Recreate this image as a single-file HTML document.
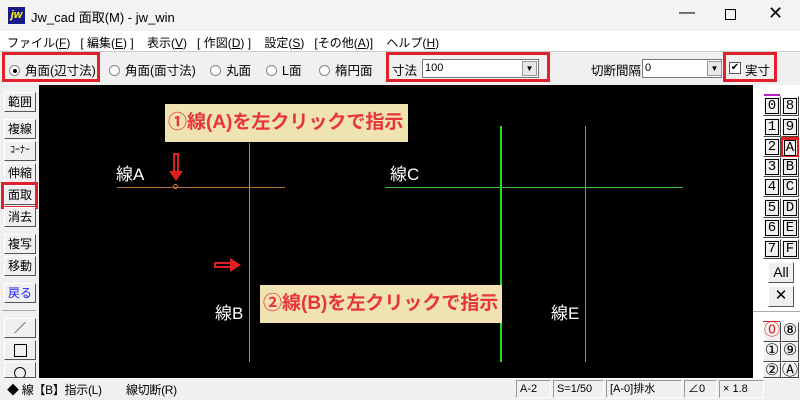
<!DOCTYPE html>
<html><head><meta charset="utf-8"><style>
*{margin:0;padding:0;box-sizing:border-box}
body{width:800px;height:400px;overflow:hidden;background:#f0f0f0;font-family:"Liberation Sans","Noto Sans CJK JP",sans-serif;font-size:12px;color:#000;position:relative}
.a{position:absolute}
.btn{position:absolute;background:#f0f0f0;border:1px solid;border-color:#fff #555 #555 #fff;text-align:center;font-size:12px;line-height:18px}
.rb{position:absolute;width:18px;height:20px;border:1px solid;border-color:#fff #444 #444 #fff;background:#f0f0f0;font-family:"Liberation Mono",monospace;font-size:14px;text-align:center;line-height:17px}
.rb span{display:inline-block;border:1px solid #000;width:14px;height:16px;line-height:14px;margin-top:1px}
.red{position:absolute;border:3px solid #e0202a}
.radio{display:inline-block;width:11px;height:11px;border:1px solid #888;border-radius:50%;background:#fff;vertical-align:-1px;margin-right:5px;position:relative}
.call{position:absolute;background:#efe4b0;color:#e8343a;font-weight:bold;font-size:19px;line-height:38px;padding-left:3px;white-space:nowrap}
.lbl{position:absolute;color:#fff;font-size:17px;font-family:"Liberation Sans","Noto Sans CJK JP",sans-serif}
.sb{position:absolute;top:380px;height:18px;border:1px solid;border-color:#999 #fff #fff #999;font-size:11px;line-height:16px;padding-left:3px}
</style></head><body>
<div class="a" style="left:0;top:0;width:800px;height:31px;background:#f3f3f3"></div>
<div class="a" style="left:8px;top:7px;width:17px;height:17px;background:#1a1a8a;color:#ff0;font-weight:bold;font-style:italic;font-size:11px;line-height:17px;text-align:center">jw</div>
<div class="a" style="left:31px;top:7px;font-size:13px">Jw_cad 面取(M) - jw_win</div>
<div class="a" style="left:679px;top:4px;font-size:16px">—</div>
<div class="a" style="left:725px;top:9px;width:11px;height:11px;border:1px solid #000"></div>
<div class="a" style="left:768px;top:3px;font-size:18px">✕</div>
<div class="a" style="left:0;top:31px;width:800px;height:20px;background:#fff"></div>
<div class="a" style="left:7px;top:34px;font-size:12px;white-space:pre">ファイル(<u>F</u>)   [ 編集(<u>E</u>) ]    表示(<u>V</u>)   [ 作図(<u>D</u>) ]    設定(<u>S</u>)   [その他(<u>A</u>)]    ヘルプ(<u>H</u>)</div>
<div class="a" style="left:0;top:51px;width:800px;height:34px;background:#f0f0f0;border-top:1px solid #ccc"></div>
<div class="a" style="left:9px;top:60px;font-size:12.5px;white-space:nowrap"><span class="radio"><span class="a" style="left:3px;top:3px;width:4px;height:4px;background:#000;border-radius:50%"></span></span>角面(辺寸法)</div>
<div class="a" style="left:109px;top:60px;font-size:12.5px;white-space:nowrap"><span class="radio"></span>角面(面寸法)</div>
<div class="a" style="left:210px;top:60px;font-size:12.5px;white-space:nowrap"><span class="radio"></span>丸面</div>
<div class="a" style="left:266px;top:60px;font-size:12.5px;white-space:nowrap"><span class="radio"></span>L面</div>
<div class="a" style="left:319px;top:60px;font-size:12.5px;white-space:nowrap"><span class="radio"></span>楕円面</div>
<div class="red" style="left:2px;top:52px;width:98px;height:30px"></div>
<div class="a" style="left:392px;top:60px;font-size:12.5px">寸法</div>
<div class="a" style="left:422px;top:59px;width:117px;height:19px;background:#fff;border:1px solid #777;font-size:11px;padding-left:2px;line-height:17px">100</div>
<div class="a" style="left:522px;top:61px;width:15px;height:15px;background:#e8e8e8;border:1px solid #999;font-size:8px;text-align:center;line-height:14px">▼</div>
<div class="red" style="left:386px;top:52px;width:164px;height:30px"></div>
<div class="a" style="left:591px;top:60px;font-size:12.5px">切断間隔</div>
<div class="a" style="left:642px;top:59px;width:80px;height:19px;background:#fff;border:1px solid #777;font-size:11px;padding-left:2px;line-height:17px">0</div>
<div class="a" style="left:707px;top:61px;width:15px;height:15px;background:#e8e8e8;border:1px solid #999;font-size:8px;text-align:center;line-height:14px">▼</div>
<div class="a" style="left:729px;top:62px;width:12px;height:12px;background:#fff;border:1px solid #555;font-size:10px;line-height:10px;text-align:center">✔</div>
<div class="a" style="left:745px;top:60px;font-size:12.5px">実寸</div>
<div class="red" style="left:723px;top:52px;width:54px;height:30px"></div>
<div class="a" style="left:39px;top:85px;width:714px;height:293px;background:#000"></div>
<div class="a" style="left:117px;top:187px;width:168px;height:1px;background:#b07030"></div>
<div class="a" style="left:249px;top:143px;width:1px;height:219px;background:#60b060"></div>
<div class="a" style="left:385px;top:187px;width:298px;height:1px;background:#40c040"></div>
<div class="a" style="left:500px;top:126px;width:2px;height:236px;background:#20e020"></div>
<div class="a" style="left:585px;top:126px;width:1px;height:236px;background:#40c040"></div>
<div class="a" style="left:173px;top:184px;width:5px;height:5px;border:1px solid #e08020;border-radius:50%"></div>
<div class="a" style="left:173px;top:153px;width:6px;height:20px;border:2px solid #e02020;border-bottom:none"></div>
<div class="a" style="left:169px;top:171px;width:0;height:0;border-left:7px solid transparent;border-right:7px solid transparent;border-top:10px solid #e02020"></div>
<div class="a" style="left:214px;top:262px;width:18px;height:6px;border:2px solid #e02020;border-right:none"></div>
<div class="a" style="left:230px;top:258px;width:0;height:0;border-top:7px solid transparent;border-bottom:7px solid transparent;border-left:11px solid #e02020"></div>
<div class="lbl" style="left:116px;top:160px">線A</div>
<div class="lbl" style="left:390px;top:160px">線C</div>
<div class="lbl" style="left:215px;top:299px">線B</div>
<div class="lbl" style="left:551px;top:299px">線E</div>
<div class="call" style="left:165px;top:104px;width:243px;height:38px">①線(A)を左クリックで指示</div>
<div class="call" style="left:260px;top:285px;width:242px;height:38px">②線(B)を左クリックで指示</div>
<div class="btn" style="left:4px;top:92px;width:32px;height:20px">範囲</div>
<div class="btn" style="left:4px;top:119px;width:32px;height:20px">複線</div>
<div class="btn" style="left:4px;top:141px;width:32px;height:20px;font-size:10px">ｺｰﾅｰ</div>
<div class="btn" style="left:4px;top:163px;width:32px;height:20px">伸縮</div>
<div class="btn" style="left:4px;top:185px;width:32px;height:20px">面取</div>
<div class="red" style="left:1px;top:182px;width:37px;height:27px"></div>
<div class="btn" style="left:4px;top:207px;width:32px;height:20px">消去</div>
<div class="btn" style="left:4px;top:234px;width:32px;height:20px">複写</div>
<div class="btn" style="left:4px;top:256px;width:32px;height:20px">移動</div>
<div class="btn" style="left:4px;top:283px;width:32px;height:20px;color:#1a1aff">戻る</div>
<div class="a" style="left:2px;top:310px;width:34px;height:1px;background:#aaa"></div>
<div class="btn" style="left:4px;top:318px;width:32px;height:20px">／</div>
<div class="btn" style="left:4px;top:340px;width:32px;height:20px"><span style="display:inline-block;width:13px;height:13px;border:1px solid #000;margin-top:3px"></span></div>
<div class="btn" style="left:4px;top:362px;width:32px;height:16px;overflow:hidden"><span style="display:inline-block;width:12px;height:12px;border:1px solid #000;border-radius:50%;margin-top:4px"></span></div>
<div class="a" style="left:753px;top:85px;width:47px;height:293px;background:#fff"></div>
<div class="a" style="left:764px;top:94px;width:16px;height:2px;background:#c020c0"></div>
<div class="rb" style="left:763px;top:96px"><span>0</span></div><div class="rb" style="left:781px;top:96px"><span>8</span></div>
<div class="rb" style="left:763px;top:117px"><span>1</span></div><div class="rb" style="left:781px;top:117px"><span>9</span></div>
<div class="rb" style="left:763px;top:137px"><span>2</span></div><div class="rb" style="left:781px;top:137px;border:2px solid #e02020;border-top-width:3px;line-height:14px"><span style="width:12px;margin-top:0">A</span></div>
<div class="rb" style="left:763px;top:157px"><span>3</span></div><div class="rb" style="left:781px;top:157px"><span>B</span></div>
<div class="rb" style="left:763px;top:177px"><span>4</span></div><div class="rb" style="left:781px;top:177px"><span>C</span></div>
<div class="rb" style="left:763px;top:198px"><span>5</span></div><div class="rb" style="left:781px;top:198px"><span>D</span></div>
<div class="rb" style="left:763px;top:218px"><span>6</span></div><div class="rb" style="left:781px;top:218px"><span>E</span></div>
<div class="rb" style="left:763px;top:239px"><span>7</span></div><div class="rb" style="left:781px;top:239px"><span>F</span></div>
<div class="btn" style="left:768px;top:262px;width:26px;height:21px;font-size:14px">All</div>
<div class="btn" style="left:768px;top:286px;width:26px;height:21px;font-size:15px">✕</div>
<div class="a" style="left:753px;top:311px;width:47px;height:1px;background:#aaa"></div>
<div class="a" style="left:763px;top:321px;width:17px;height:2px;background:#e02020"></div>
<div class="rb" style="left:763px;top:322px;color:#e02020;font-size:16px">⓪</div><div class="rb" style="left:781px;top:322px;font-size:16px">⑧</div>
<div class="rb" style="left:763px;top:342px;font-size:16px">①</div><div class="rb" style="left:781px;top:342px;font-size:16px">⑨</div>
<div class="rb" style="left:763px;top:362px;height:16px;overflow:hidden;font-size:16px">②</div><div class="rb" style="left:781px;top:362px;height:16px;overflow:hidden;font-size:16px">Ⓐ</div>
<div class="a" style="left:0;top:378px;width:800px;height:22px;background:#f0f0f0;border-top:1px solid #fff"></div>
<div class="a" style="left:7px;top:381px;font-size:12px;white-space:pre;letter-spacing:-0.3px">◆ 線【B】指示(L)        線切断(R)</div>
<div class="sb" style="left:516px;width:35px">A-2</div>
<div class="sb" style="left:553px;width:51px">S=1/50</div>
<div class="sb" style="left:606px;width:76px">[A-0]排水</div>
<div class="sb" style="left:684px;width:33px">∠0</div>
<div class="sb" style="left:719px;width:45px">× 1.8</div>
</body></html>
